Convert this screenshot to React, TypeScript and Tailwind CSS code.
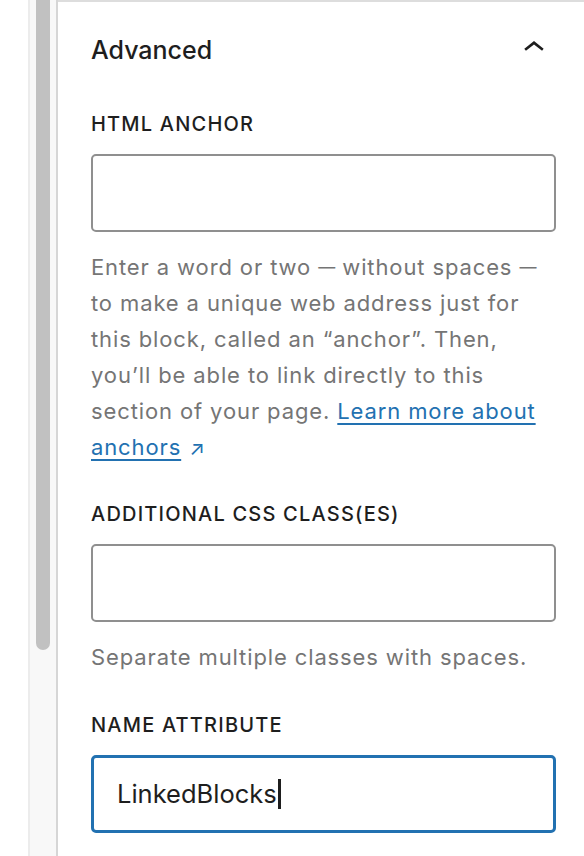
import * as React from "react"

const font = { fontFamily: "Inter, 'Noto Sans', sans-serif" }

function Label({ children }: { children: React.ReactNode }) {
  return (
    <div className="mb-[16px] text-[20px] leading-[28px] font-medium uppercase tracking-[0.06em] text-[#1e1e1e]">
      {children}
    </div>
  )
}

function TextInput({ value, focused }: { value?: string; focused?: boolean }) {
  return (
    <div
      className={`flex h-[78px] items-center rounded-[5px] bg-white px-[23px] ${
        focused ? "border-[3px] border-[#2271b1]" : "border-2 border-[#8f8f8f]"
      }`}
    >
      {value && (
        <span className="flex items-center text-[25.5px] text-[#1e1e1e]">
          {value}
          <span className="ml-[1px] inline-block h-[30px] w-[3px] bg-[#1e1e1e]" />
        </span>
      )}
    </div>
  )
}

function Help({ children }: { children: React.ReactNode }) {
  return (
    <p className="mt-[17px] whitespace-nowrap text-[22px] leading-[36px] tracking-[0.04em] text-[#757575]">
      {children}
    </p>
  )
}

function Dash() {
  return <span className="relative top-[-2px] text-[17px] leading-none tracking-normal">—</span>
}

export default function App() {
  return (
    <div className="flex h-[856px] w-[584px] overflow-hidden bg-white" style={font}>
      {/* page gutter + scrollbar */}
      <div className="w-[28px] shrink-0 bg-white" />
      <div className="flex w-[30px] shrink-0 border-l-2 border-r-2 border-l-[#ececec] border-r-[#d6d6d6] bg-[#f8f8f8] px-[6px]">
        <div className="h-[650px] w-full rounded-b-full bg-[#c1c1c1]" />
      </div>

      {/* settings panel */}
      <div className="flex-1 border-t-2 border-[#dddddd] pl-[33px] pr-[28px]">
        <div className="flex items-center justify-between pt-[29px]">
          <h2 className="text-[25px] leading-[30px] font-medium text-[#1e1e1e]">Advanced</h2>
          <svg width="42" height="42" viewBox="0 0 24 24" className="mr-[1px] mt-[-4px] text-[#1e1e1e]" fill="currentColor">
            <path d="M6.5 12.4L12 8l5.5 4.4-.9 1.2L12 10l-4.6 3.6-1-1.2z" />
          </svg>
        </div>

        <div className="mt-[41px]">
          <Label>HTML anchor</Label>
          <TextInput />
          <Help>
            Enter a word or two <Dash /> without spaces <Dash />
            <br />
            to make a unique web address just for
            <br />
            this block, called an “anchor”. Then,
            <br />
            you’ll be able to link directly to this
            <br />
            section of your page.{" "}
            <a className="text-[#2271b1]">
              <span className="underline decoration-[2px] underline-offset-[4px]">Learn more about</span>
              <br />
              <span className="underline decoration-[2px] underline-offset-[4px]">anchors</span>
              <span className="ml-[8px] text-[20px] leading-none">↗</span>
            </a>
          </Help>
        </div>

        <div className="mt-[35px]">
          <Label>Additional CSS class(es)</Label>
          <TextInput />
          <Help>Separate multiple classes with spaces.</Help>
        </div>

        <div className="mt-[36px]">
          <Label>Name attribute</Label>
          <TextInput value="LinkedBlocks" focused />
        </div>
      </div>
    </div>
  )
}
